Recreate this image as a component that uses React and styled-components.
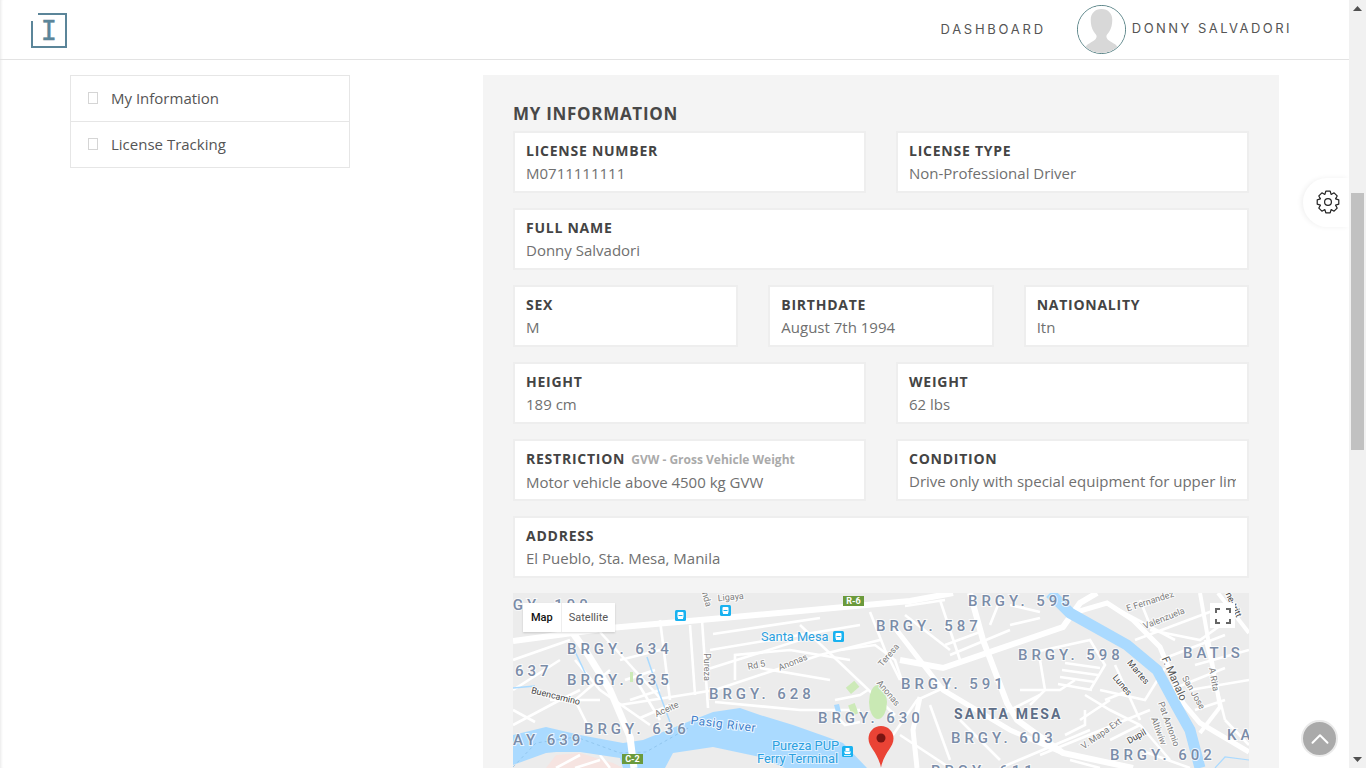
import React from 'react';
import styled, { createGlobalStyle } from 'styled-components';
import { ChevronUp } from 'lucide-react';

const Global = createGlobalStyle`
  html, body { margin: 0; height: 100%; overflow: hidden; background: #fff; }
  body { font-family: "Open Sans", "Liberation Sans", sans-serif; color: #444; }
  * { box-sizing: border-box; }
`;

const Page = styled.div`
  height: 768px;
  width: 1366px;
  overflow: hidden;
  padding-right: 17px;
`;
const Inner = styled.div`
  height: 100%;
  box-shadow: inset 3px 0 3px -2px #e8e8e8;
`;
const Header = styled.header`
  height: 60px;
  display: flex;
  align-items: center;
  justify-content: space-between;
  padding: 1px 57px 0 31px;
  border-bottom: 1px solid #e3e3e3;
`;
const Nav = styled.nav`
  display: flex;
  align-items: center;
  margin-top: -2px;
`;
const NavLink = styled.a`
  font-family: Inter, "Open Sans", sans-serif;
  font-size: 13px;
  letter-spacing: ${p => p.$spacing}px;
  color: #555;
  margin-right: ${p => p.$gap || 0}px;
  position: relative;
  top: ${p => p.$drop}px;
`;
const Avatar = styled.div`
  width: 49px;
  height: 49px;
  border-radius: 50%;
  border: 1px solid #4f7c80;
  overflow: hidden;
  margin-right: 6px;
`;
const Main = styled.main`
  display: flex;
  align-items: flex-start;
  padding: 15px 0 0 70px;
`;
const Sidebar = styled.ul`
  width: 280px;
  margin: 0 133px 0 0;
  padding: 0;
  list-style: none;
  border: 1px solid #e6e6e6;
`;
const SideItem = styled.li`
  height: 45px;
  display: flex;
  align-items: center;
  padding: 0 0 2px 17px;
  font-size: 15px;
  color: #555;
  & + & { border-top: 1px solid #e6e6e6; height: 46px; }
`;
const MissingGlyph = styled.span`
  width: 10px;
  height: 12px;
  border: 1px solid #d5d5d5;
  margin-right: 13px;
`;
const Panel = styled.section`
  width: 796px;
  height: 700px;
  background: #f4f4f4;
  padding: 28px 30px 0;
`;
const Title = styled.h2`
  margin: 0 0 6px;
  font-size: 17px;
  line-height: 22px;
  font-weight: 700;
  letter-spacing: 0.7px;
  color: #484848;
`;
const Row = styled.div`
  display: flex;
  gap: 30px;
  margin-bottom: 15px;
`;
const Card = styled.div`
  flex: 1 1 0;
  min-width: 0;
  height: 62px;
  background: #fff;
  border: 2px solid #eeeeee;
  padding: 8px 11px 0;
  overflow: hidden;
`;
const Label = styled.div`
  font-size: 14px;
  line-height: 20px;
  font-weight: 700;
  letter-spacing: 0.75px;
  color: #444;
  white-space: nowrap;
`;
const Hint = styled.span`
  font-size: 12px;
  letter-spacing: 0;
  color: #aaa;
  margin-left: 6px;
`;
const Value = styled.div`
  font-size: 15px;
  line-height: 24px;
  color: #707070;
  white-space: nowrap;
  overflow: hidden;
`;
const MapBox = styled.div`
  position: relative;
  height: 180px;
  overflow: hidden;
  background: #ececec;
`;
const MapSvg = styled.svg`
  display: block;
`;
const MapType = styled.div`
  position: absolute;
  left: 10px;
  top: 10px;
  display: flex;
  height: 29px;
  background: #fff;
  box-shadow: 0 1px 2px rgba(0, 0, 0, 0.15);
  font-family: Roboto, sans-serif;
  font-size: 11px;
`;
const MapTab = styled.div`
  display: flex;
  align-items: center;
  padding: 0 ${p => (p.$active ? 8 : 7)}px;
  font-weight: ${p => (p.$active ? 500 : 400)};
  color: ${p => (p.$active ? '#111' : '#565656')};
  & + & { border-left: 1px solid #eee; }
`;
const FullScreen = styled.div`
  position: absolute;
  right: 14px;
  top: 10px;
  width: 25px;
  height: 25px;
  background: #fff;
  display: flex;
  align-items: center;
  justify-content: center;
`;
const GearTab = styled.div`
  position: fixed;
  left: 1303px;
  top: 178px;
  width: 46px;
  height: 49px;
  background: #fff;
  border-radius: 25px 0 0 25px;
  box-shadow: -2px 0 5px rgba(0, 0, 0, 0.06);
  display: flex;
  align-items: center;
  padding: 0 0 2px 13px;
`;
const ToTop = styled.div`
  position: fixed;
  left: 1301px;
  top: 720px;
  width: 37px;
  height: 37px;
  border-radius: 50%;
  background: #aaa;
  border: 2px solid #eaeaea;
  color: #fff;
  display: flex;
  align-items: center;
  justify-content: center;
`;
const Track = styled.div`
  position: fixed;
  left: 1349px;
  top: 0;
  width: 17px;
  height: 768px;
  background: #f1f1f1;
`;
const Thumb = styled.div`
  position: absolute;
  left: 2px;
  top: 193px;
  width: 13px;
  height: 257px;
  background: #c1c1c1;
`;
const Arrow = styled.div`
  position: absolute;
  left: 4px;
  width: 9px;
  height: 5px;
  background: #505050;
  ${p => (p.$down
    ? 'bottom: 6px; clip-path: polygon(0 0, 100% 0, 50% 100%);'
    : 'top: 6px; clip-path: polygon(50% 0, 100% 100%, 0 100%);')}
`;

const Area = styled.text`
  font-family: Roboto, sans-serif;
  font-size: ${p => p.$size}px;
  font-weight: ${p => p.$weight};
  letter-spacing: ${p => p.$spacing}px;
  fill: ${p => p.$fill};
  paint-order: stroke;
  stroke: rgba(255, 255, 255, 0.75);
  stroke-width: 2px;
`;
const Street = styled.text`
  font-family: Roboto, sans-serif;
  font-size: ${p => p.$size || 9}px;
  fill: ${p => p.$fill || '#7d7d7d'};
  paint-order: stroke;
  stroke: rgba(255, 255, 255, 0.8);
  stroke-width: 2px;
  text-anchor: middle;
`;
const Transit = styled.text`
  font-family: Roboto, sans-serif;
  font-size: 12.8px;
  fill: #2b9fe0;
  paint-order: stroke;
  stroke: rgba(255, 255, 255, 0.6);
  stroke-width: 2px;
`;
const Shield = styled.text`
  font-family: Roboto, sans-serif;
  font-size: 9px;
  font-weight: 700;
  fill: #fff;
  text-anchor: middle;
`;

const WATER = '513,735 546,727 580,735 623,743 643,740 680,725 713,712 740,708 760,715 793,725 827,737 843,743 867,768 785,768 760,757 713,747 673,753 665,768 623,768 620,758 580,752 556,752 546,753 513,765';

const MAJOR = [
  [6, '513,641 610,628 723,618 910,601 953,593'],
  [7, '573,633 587,653 610,690 630,737 634,768'],
  [6, '970,593 983,640 1007,703 1017,720 1063,753 1133,768'],
  [6, '900,660 943,668 1063,627 1080,603 1097,593'],
  [5, '1073,613 1107,603 1133,620 1160,647 1183,703 1200,723 1249,752'],
  [4, '1200,593 1220,707 1200,733'],
  [4, '1218,593 1249,633'],
  [5, '895,628 943,690 1010,730 1063,753'],
  [5, '920,697 913,730 917,768'],
];

const MINOR = [
  '650,725 600,690 575,660', '620,705 715,690 820,655 880,640', '636,680 660,720', '600,632 660,698',
  '702,620 708,708', '690,625 695,695', '660,620 670,700', '713,634 820,618', '710,650 860,625', '705,670 800,640',
  '735,680 735,655 790,650 850,660', '760,668 830,680', '800,625 895,715', '715,702 800,710 860,710', '513,660 570,640',
  '513,690 560,660', '513,725 560,700 580,690', '550,700 600,700', '590,730 575,700 610,670', '620,660 660,650',
  '625,680 655,670', '630,700 660,690', '640,718 670,705', '513,710 535,722', '870,612 885,650 900,680',
  '840,650 875,645 895,660 905,690', '835,700 860,695 868,690', '832,712 845,725 860,722', '893,735 917,700 950,685',
  '905,606 945,600', '905,615 950,650', '940,600 960,660', '990,625 1000,600', '1010,605 1040,612', '1010,625 1040,618',
  '945,645 980,632', '950,655 1010,630', '1035,652 1090,640 1105,665 1090,690', '1065,663 1100,668', '1062,670 1098,675',
  '1060,677 1095,682', '1058,684 1092,690', '1020,690 1060,690 1075,680', '1040,660 1045,690 1030,705', '1000,715 1040,695',
  '1100,690 1145,700 1165,668', '1105,700 1130,690', '1115,665 1140,720', '1085,695 1110,710 1140,725 1170,760',
  '1080,720 1110,700', '1040,755 1150,710', '1065,735 1085,725 1085,710', '1110,740 1140,725', '1110,605 1175,640', '1140,600 1150,625',
  '1135,640 1215,610', '1150,630 1200,640 1235,615', '1160,660 1225,635', '1195,665 1249,650', '1190,690 1249,680', '1195,710 1225,700',
  '1170,690 1225,668', '1205,640 1225,720', '1225,720 1249,745', '1140,750 1190,768', '930,705 950,760', '960,720 1000,760',
  '900,735 950,768', '1070,760 1100,768', '1000,768 1090,730', '556,768 580,755', '575,768 600,760', '610,768 600,755',
];

const AREAS = [
  ['BRGY. 190', 486, 610], ['BRGY. 634', 567, 654], ['637', 515, 676], ['BRGY. 635', 567, 685],
  ['BRGY. 628', 709, 699], ['BRGY. 636', 584, 734], ['AY 639', 513, 745], ['BRGY. 630', 818, 723],
  ['BRGY. 595', 968, 606], ['BRGY. 587', 876, 631], ['BRGY. 598', 1018, 660], ['BRGY. 591', 901, 689],
  ['BRGY. 603', 951, 743], ['BRGY. 602', 1110, 760], ['BRGY. 611', 931, 776], ['BATIS', 1183, 658], ['KA', 1227, 740],
];

const STREETS = [
  ['Ligaya', 731, 600, -5], ['nda', 704, 600, 75], ['Pureza', 704, 667, 90], ['Rd 5', 757, 668, -12],
  ['Anonas', 794, 665, -22], ['Teresa', 891, 657, -50], ['Anonas', 886, 695, 50], ['Aceite', 668, 712, -25],
  ['E Fernandez', 1151, 604, -18], ['Valenzuela', 1165, 621, -22], ['A Rita', 1211, 680, 80],
  ['San Jose', 1191, 694, 60], ['Pat Antonio', 1166, 725, 70], ['Altiwiw', 1156, 732, 70], ['V. Mapa Ext', 1103, 736, -35],
];
const DARK_STREETS = [
  ['Buencamino', 555, 699, 14], ['Martes', 1136, 674, 50], ['Lunes', 1120, 687, 50], ['Dupil', 1138, 739, -30],
  ['ne-tritt', 1231, 606, 65],
];

function gearPath() {
  const pts = [];
  for (let i = 0; i < 8; i++) {
    const a = (i * Math.PI) / 4;
    [[-0.39, 8.2], [-0.2, 11], [0.2, 11], [0.39, 8.2]].forEach(([da, r]) => {
      pts.push(`${(12 + r * Math.cos(a + da)).toFixed(2)} ${(12 + r * Math.sin(a + da)).toFixed(2)}`);
    });
  }
  return `M${pts.join('L')}Z`;
}

function BusIcon({ x, y }) {
  return (
    <g>
      <rect x={x} y={y} width="11" height="11" rx="1.5" fill="#19b2f0" />
      <rect x={x + 2.5} y={y + 2} width="6" height="6" rx="1" fill="#fff" />
      <rect x={x + 3.5} y={y + 5} width="4" height="1" fill="#19b2f0" />
      <rect x={x + 3} y={y + 8} width="5" height="1" fill="#fff" />
    </g>
  );
}

function FerryIcon({ x, y }) {
  return (
    <g>
      <rect x={x} y={y} width="11" height="11" rx="1.5" fill="#19b2f0" />
      <rect x={x + 3.5} y={y + 2} width="4" height="3" fill="#fff" />
      <polygon points={`${x + 2},${y + 5.5} ${x + 9},${y + 5.5} ${x + 8},${y + 8} ${x + 3},${y + 8}`} fill="#fff" />
      <rect x={x + 2} y={y + 9} width="7" height="0.8" fill="#fff" />
    </g>
  );
}

function CityMap() {
  return (
    <MapSvg width="736" height="180" viewBox="513 593 736 180">
      <polygon points="546,768 556,755 580,753 613,763 623,768" fill="#f6e4e1" />
      {MINOR.map(d => <polyline key={d} points={d} fill="none" stroke="#fff" strokeWidth="2.6" />)}
      {MAJOR.map(([w, d]) => <polyline key={d} points={d} fill="none" stroke="#fff" strokeWidth={w} />)}
      <polyline points="1050,593 1070,613 1127,645 1157,670 1177,707 1190,730 1200,768" fill="none" stroke="#aadaff" strokeWidth="11" />
      <polygon points={WATER} fill="#aadaff" />
      <polyline points="513,767 536,743 576,737 620,753 646,752 690,727" fill="none" stroke="#86bde6" strokeWidth="0.7" strokeDasharray="3 3" />
      <polyline points="573,647 587,677" fill="none" stroke="#aadaff" strokeWidth="1.5" />
      <polyline points="513,688 535,686" fill="none" stroke="#aadaff" strokeWidth="1.5" />
      <polyline points="647,657 660,695 670,722" fill="none" stroke="#aadaff" strokeWidth="1.5" />
      <polyline points="1215,768 1225,757 1249,760" fill="none" stroke="#aadaff" strokeWidth="1.2" />
      <polyline points="630,737 634,768" fill="none" stroke="#fff" strokeWidth="7" />
      <ellipse cx="878" cy="702" rx="9" ry="17" fill="#c9e9b4" />
      <rect x="847" y="683" width="11" height="8" fill="#cdeab8" transform="rotate(-40 853 687)" />
      <rect x="850" y="704" width="7" height="11" fill="#cdeab8" transform="rotate(-20 853 710)" />
      <rect x="630" y="672" width="3" height="10" fill="#cdeab8" />
      <polygon points="834,705 839,704 841,712 836,712" fill="#aadaff" />
      {AREAS.map(([t, x, y]) => <Area key={t} x={x} y={y} $size={15} $weight={500} $spacing={3.95} $fill="#7a8ca8">{t}</Area>)}
      <Area x="954" y="719" $size={14} $weight={700} $spacing={2.2} $fill="#5e6e87">SANTA MESA</Area>
      {STREETS.map(([t, x, y, r]) => <Street key={t + x} x={x} y={y} transform={`rotate(${r} ${x} ${y})`}>{t}</Street>)}
      {DARK_STREETS.map(([t, x, y, r]) => <Street key={t} x={x} y={y} $fill="#444" transform={`rotate(${r} ${x} ${y})`}>{t}</Street>)}
      <Street x="1171" y="680" $size={11} $fill="#555" transform="rotate(66 1171 680)">F. Manalo</Street>
      <Street x="723" y="728" $size={12} $fill="#3f7fca" transform="rotate(7 723 728)" style={{ letterSpacing: 0.6 }}>Pasig River</Street>
      <Transit x="761" y="641">Santa Mesa</Transit>
      <Transit x="772" y="750">Pureza PUP</Transit>
      <Transit x="757" y="763">Ferry Terminal</Transit>
      <BusIcon x={675} y={610} />
      <BusIcon x={720} y={605} />
      <BusIcon x={833} y={631} />
      <FerryIcon x={842} y={746} />
      <rect x="843" y="596" width="21" height="10" fill="#6b9a3c" />
      <Shield x="853.5" y="604">R-6</Shield>
      <rect x="622" y="754" width="21" height="10" fill="#6b9a3c" />
      <Shield x="632.5" y="762">C-2</Shield>
      <path d="M881 726c-7 0-12.500 5.500-12.500 12.500 0 9 9 13 12.500 29 3.500-16 12.500-20 12.500-29 0-7-5.500-12.500-12.500-12.500z" fill="#ea4335" />
      <circle cx="881" cy="738" r="4.500" fill="#7a1512" />
    </MapSvg>
  );
}

function Logo() {
  return (
    <svg width="36" height="35" viewBox="0 0 36 35">
      <path d="M7 1H35V34H1V8" fill="none" stroke="#5b8599" strokeWidth="2" />
      <text x="18" y="27" textAnchor="middle" fontFamily="DejaVu Sans Mono, monospace" fontSize="27" fill="#5b8599" stroke="#5b8599" strokeWidth="0.4">I</text>
    </svg>
  );
}

function Silhouette() {
  return (
    <svg width="47" height="47" viewBox="0 0 48 48">
      <rect width="48" height="48" fill="#fff" />
      <path d="M24 3c-7 0-11 5-11 11 0 5 1 9 3 12 1 2 3 3 3 5 0 3-3 5-7 7-3 1-4 3-5 6v4h34v-4c-1-3-2-5-5-6-4-2-7-4-7-7 0-2 2-3 3-5 2-3 3-7 3-12 0-6-4-11-11-11z" fill="#d8d8d8" />
    </svg>
  );
}

function Field({ label, hint, value }) {
  return (
    <Card>
      <Label>{label}{hint && <Hint>{hint}</Hint>}</Label>
      <Value>{value}</Value>
    </Card>
  );
}

const ROWS = [
  [{ label: 'LICENSE NUMBER', value: 'M0711111111' }, { label: 'LICENSE TYPE', value: 'Non-Professional Driver' }],
  [{ label: 'FULL NAME', value: 'Donny Salvadori' }],
  [{ label: 'SEX', value: 'M' }, { label: 'BIRTHDATE', value: 'August 7th 1994' }, { label: 'NATIONALITY', value: 'Itn' }],
  [{ label: 'HEIGHT', value: '189 cm' }, { label: 'WEIGHT', value: '62 lbs' }],
  [
    { label: 'RESTRICTION', hint: 'GVW - Gross Vehicle Weight', value: 'Motor vehicle above 4500 kg GVW' },
    { label: 'CONDITION', value: 'Drive only with special equipment for upper limbs' },
  ],
  [{ label: 'ADDRESS', value: 'El Pueblo, Sta. Mesa, Manila' }],
];

export default function App() {
  return (
    <>
      <Global />
      <Page>
        <Inner>
          <Header>
            <Logo />
            <Nav>
              <NavLink $spacing={2.75} $gap={31} $drop={0}>DASHBOARD</NavLink>
              <Avatar><Silhouette /></Avatar>
              <NavLink $spacing={2.45} $drop={-1}>DONNY SALVADORI</NavLink>
            </Nav>
          </Header>
          <Main>
            <Sidebar>
              <SideItem><MissingGlyph />My Information</SideItem>
              <SideItem><MissingGlyph />License Tracking</SideItem>
            </Sidebar>
            <Panel>
              <Title>MY INFORMATION</Title>
              {ROWS.map(fields => (
                <Row key={fields[0].label}>
                  {fields.map(f => <Field key={f.label} {...f} />)}
                </Row>
              ))}
              <MapBox>
                <CityMap />
                <MapType>
                  <MapTab $active>Map</MapTab>
                  <MapTab>Satellite</MapTab>
                </MapType>
                <FullScreen>
                  <svg width="16" height="16" viewBox="0 0 16 16" fill="none" stroke="#666" strokeWidth="2">
                    <path d="M1 5V1H5M11 1H15V5M15 11V15H11M5 15H1V11" />
                  </svg>
                </FullScreen>
              </MapBox>
            </Panel>
          </Main>
        </Inner>
      </Page>
      <GearTab>
        <svg width="24" height="24" viewBox="0 0 24 24" fill="none" stroke="#222" strokeWidth="1.2" strokeLinejoin="round">
          <path d={gearPath()} />
          <circle cx="12" cy="12" r="3.4" />
        </svg>
      </GearTab>
      <ToTop><ChevronUp size={30} strokeWidth={1.6} /></ToTop>
      <Track>
        <Arrow />
        <Thumb />
        <Arrow $down />
      </Track>
    </>
  );
}
